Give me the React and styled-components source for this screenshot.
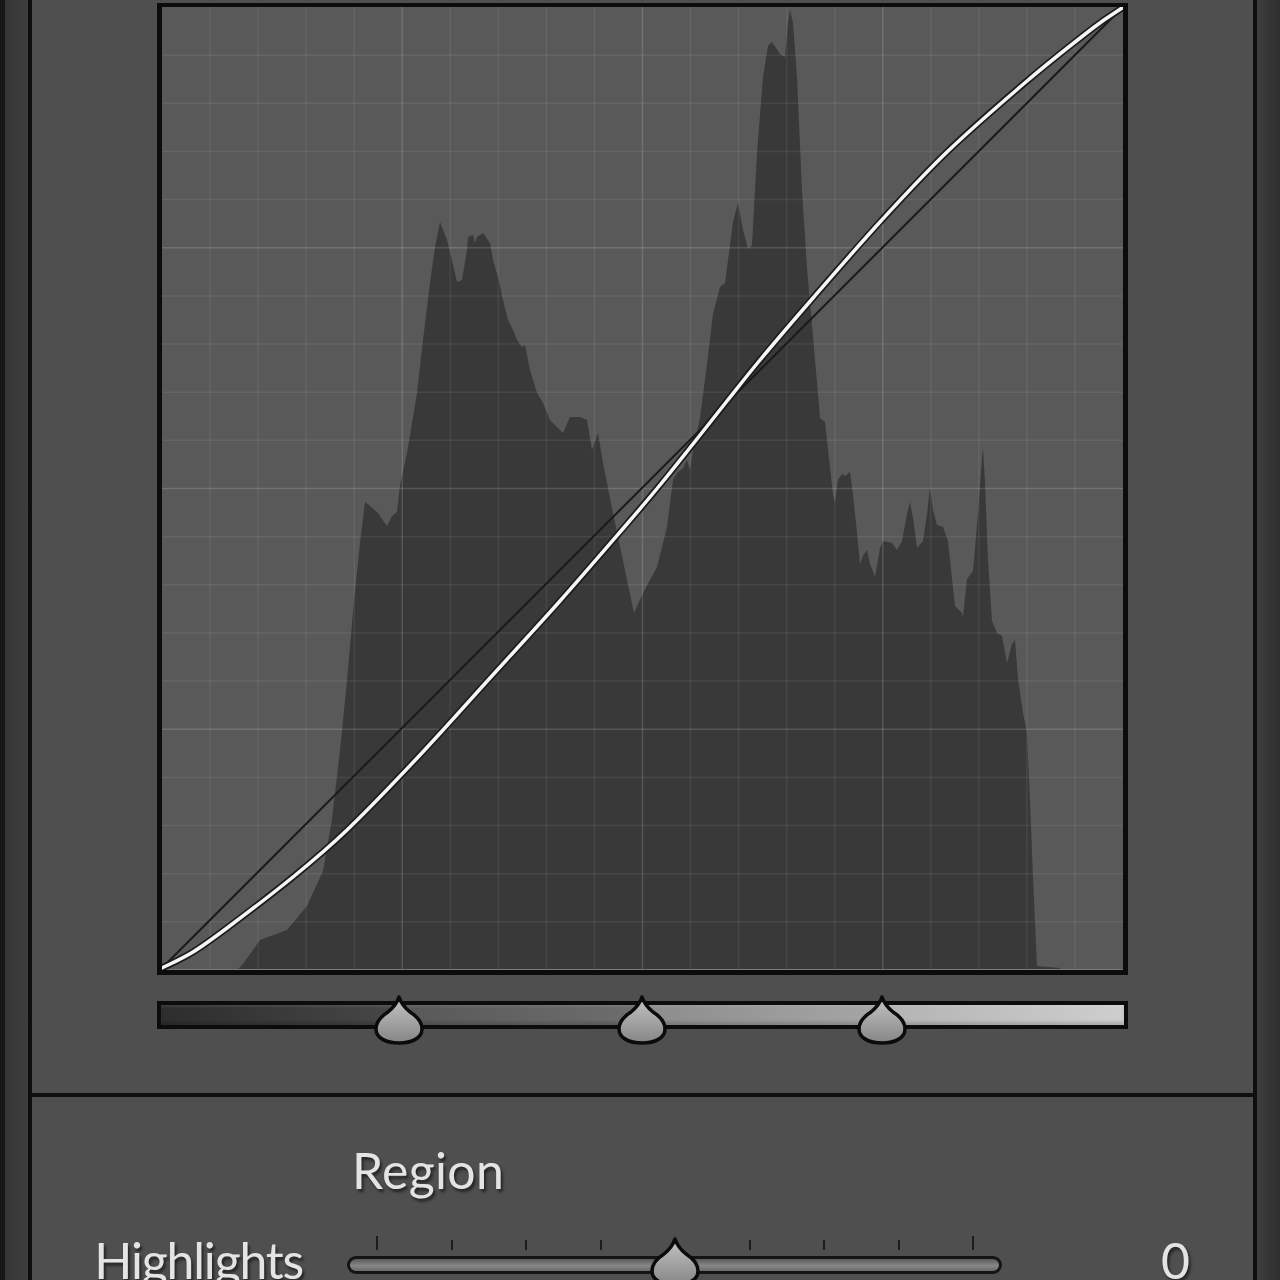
import styled, { createGlobalStyle } from "styled-components";

const GlobalStyle = createGlobalStyle`
  html, body {
    margin: 0;
    padding: 0;
    background: #3a3a3a;
  }
  body {
    font-family: Lato, "Open Sans", sans-serif;
  }
`;

// page coords, graph inner box is x 162..1123, y 7..970
const HISTO = [
  [237, 970], [243, 964], [260, 940], [287, 930], [307, 906], [323, 871], [332, 819],
  [340, 750], [347, 681], [353, 612], [360, 543], [365, 502], [370, 506], [377, 512],
  [387, 526], [392, 516], [397, 512], [400, 485], [407, 453], [417, 393], [423, 340],
  [430, 283], [435, 247], [440, 222], [447, 240], [452, 260], [457, 282], [462, 280],
  [467, 250], [468, 237], [473, 235], [475, 243], [477, 237], [483, 233], [490, 243],
  [493, 260], [498, 277], [503, 300], [508, 320], [513, 330], [517, 340], [522, 347],
  [525, 345], [530, 370], [537, 393], [543, 403], [550, 420], [557, 427], [563, 433],
  [570, 417], [580, 417], [587, 420], [592, 450], [598, 433], [603, 463], [613, 513],
  [627, 580], [634, 613], [643, 593], [657, 567], [667, 527], [673, 480], [677, 473],
  [683, 468], [687, 460], [690, 470], [693, 450], [700, 418], [707, 364], [713, 314],
  [720, 287], [725, 283], [730, 245], [733, 222], [738, 203], [743, 230], [748, 249],
  [752, 245], [757, 153], [763, 77], [768, 46], [772, 42], [780, 54], [785, 57],
  [788, 23], [790, 10], [793, 23], [797, 77], [802, 191], [807, 268], [812, 325],
  [817, 383], [820, 418], [825, 422], [828, 449], [833, 495], [835, 502], [838, 480],
  [842, 474], [845, 476], [850, 472], [853, 495], [857, 533], [860, 564], [863, 556],
  [867, 550], [870, 564], [875, 577], [880, 548], [883, 541], [892, 543], [897, 550],
  [902, 541], [907, 514], [910, 502], [913, 518], [917, 548], [923, 541], [927, 514],
  [930, 487], [933, 510], [937, 525], [943, 527], [948, 541], [952, 579], [955, 606],
  [962, 613], [963, 617], [967, 579], [973, 571], [978, 514], [982, 457], [983, 449],
  [985, 483], [988, 560], [992, 621], [997, 633], [1002, 636], [1007, 663], [1012, 644],
  [1015, 640], [1018, 679], [1023, 713], [1027, 732], [1030, 801], [1033, 878],
  [1037, 966], [1060, 968], [1060, 970],
];

const CURVE = [
  [162, 968], [193, 952], [227, 928], [293, 877], [347, 830], [420, 755], [490, 678],
  [560, 601], [627, 524], [660, 485], [693, 444], [727, 401], [760, 360], [813, 298],
  [880, 222], [947, 152], [1027, 81], [1093, 28], [1122, 8],
];

const smooth = (pts) => {
  let d = `M${pts[0][0]} ${pts[0][1]}`;
  for (let i = 0; i < pts.length - 1; i++) {
    const p0 = pts[i - 1] || pts[i];
    const p1 = pts[i];
    const p2 = pts[i + 1];
    const p3 = pts[i + 2] || p2;
    const c1x = p1[0] + (p2[0] - p0[0]) / 6;
    const c1y = p1[1] + (p2[1] - p0[1]) / 6;
    const c2x = p2[0] - (p3[0] - p1[0]) / 6;
    const c2y = p2[1] - (p3[1] - p1[1]) / 6;
    d += ` C${c1x.toFixed(1)} ${c1y.toFixed(1)} ${c2x.toFixed(1)} ${c2y.toFixed(1)} ${p2[0]} ${p2[1]}`;
  }
  return d;
};

const GX = 162;
const GY = 7;
const GW = 961;
const GH = 963;

const Page = styled.div`
  display: flex;
  width: 1280px;
  height: 1280px;
  overflow: hidden;
  background: #3a3a3a;
`;

const Gutter = styled.div`
  flex: none;
  width: ${(p) => p.$w}px;
  box-sizing: border-box;
  border-left: ${(p) => (p.$edge ? "5px solid #171717" : "none")};
  background: ${(p) =>
    p.$edge
      ? "linear-gradient(90deg, #363636, #3e3e3e)"
      : "linear-gradient(90deg, #3d3d3d, #2f2f2f)"};
`;

const Panel = styled.div`
  flex: 1;
  display: flex;
  flex-direction: column;
  background: #4f4f4f;
  border-left: 4px solid #0e0e0e;
  border-right: 4px solid #0e0e0e;
`;

const CurveSection = styled.div`
  padding: 3px 125px 64px;
  border-bottom: 4px solid #0e0e0e;
`;

const Graph = styled.div`
  box-sizing: border-box;
  width: 971px;
  height: 972px;
  border: 5px solid #0c0c0c;
  border-top-width: 4px;
  background: #595959;
  svg {
    display: block;
  }
`;

const BarWrap = styled.div`
  position: relative;
  margin-top: 26px;
`;

const GradientBar = styled.div`
  box-sizing: border-box;
  height: 28px;
  border: 4px solid #0c0c0c;
  background: linear-gradient(
    90deg,
    #2d2d2d 0%,
    #474747 24.7%,
    #585858 24.7%,
    #6e6e6e 49.9%,
    #8c8c8c 49.9%,
    #a6a6a6 74.9%,
    #b3b3b3 74.9%,
    #cecece 100%
  );
  box-shadow: inset 0 2px 2px rgba(255, 255, 255, 0.08), inset 0 -3px 3px rgba(0, 0, 0, 0.15);
`;

const ThumbBox = styled.div`
  position: absolute;
  top: ${(p) => p.$top}px;
  left: ${(p) => p.$left};
  width: 52px;
  height: 52px;
  transform: translateX(-50%);
  svg {
    display: block;
  }
`;

const RegionSection = styled.div`
  padding-top: 43px;
  color: #e4e4e4;
`;

const Title = styled.div`
  margin-left: 320px;
  font-size: 50px;
  line-height: 60px;
  height: 60px;
  letter-spacing: 0.3px;
  text-shadow: 2px 3px 3px rgba(0, 0, 0, 0.55);
`;

const Row = styled.div`
  display: grid;
  grid-template-columns: 315px 655px 1fr;
  margin-top: 30px;
  height: 60px;
`;

const Label = styled.div`
  text-align: right;
  padding-right: ${(p) => p.$pr}px;
  font-size: 50px;
  line-height: 60px;
  letter-spacing: ${(p) => (p.$tight ? "-1.2px" : "0")};
  text-shadow: 2px 3px 3px rgba(0, 0, 0, 0.55);
`;

const SliderCell = styled.div`
  position: relative;
  height: 60px;
`;

const Ticks = styled.div`
  display: flex;
  justify-content: space-between;
  align-items: flex-end;
  height: 14px;
  margin-top: 6px;
  padding: 0 28px 0 29px;
`;

const Tick = styled.div`
  width: 2px;
  height: ${(p) => (p.$long ? 14 : 10)}px;
  background: #1c1c1c;
`;

const Track = styled.div`
  box-sizing: border-box;
  margin-top: 6px;
  height: 18px;
  border: 3px solid #141414;
  border-radius: 9px;
  background: linear-gradient(180deg, #5a5a5a 0%, #878787 55%, #6a6a6a 100%);
`;

const Thumb = ({ left, top }) => (
  <ThumbBox $left={left} $top={top}>
    <svg width="52" height="52" viewBox="0 0 52 52">
      <defs>
        <linearGradient id="thumbFill" x1="0" y1="0" x2="0" y2="1">
          <stop offset="0" stopColor="#c4c4c4" />
          <stop offset="0.55" stopColor="#a2a2a2" />
          <stop offset="1" stopColor="#858585" />
        </linearGradient>
      </defs>
      <path
        d="M26 3 C28 9 32 14 37 18 C45 23 49 29 49 35 C49 44 39 49 26 49 C13 49 3 44 3 35 C3 29 7 23 15 18 C20 14 24 9 26 3 Z"
        fill="url(#thumbFill)"
        stroke="#0b0b0b"
        strokeWidth="3.5"
        strokeLinejoin="round"
      />
    </svg>
  </ThumbBox>
);

const ToneGraph = () => {
  const lines = [];
  for (let i = 1; i < 20; i++) {
    const major = i % 5 === 0;
    const x = GX + (GW * i) / 20;
    const y = GY + (GH * i) / 20;
    const stroke = major ? "rgba(255,255,255,0.15)" : "rgba(255,255,255,0.07)";
    lines.push(<line key={"v" + i} x1={x} y1={GY} x2={x} y2={GY + GH} stroke={stroke} strokeWidth="1.5" />);
    lines.push(<line key={"h" + i} x1={GX} y1={y} x2={GX + GW} y2={y} stroke={stroke} strokeWidth="1.5" />);
  }
  const histo = "M" + HISTO.map((p) => p.join(" ")).join(" L") + " Z";
  const curve = smooth(CURVE);
  return (
    <svg width={GW} height={GH} viewBox={`${GX} ${GY} ${GW} ${GH}`}>
      <path d={histo} fill="#393939" />
      {lines}
      <line x1={GX} y1={GY + GH} x2={GX + GW} y2={GY + GH} stroke="#7a7a7a" strokeWidth="2" />
      <line x1="162" y1="968" x2="1122" y2="8" stroke="#1b1b1b" strokeWidth="2" />
      <path d={curve} fill="none" stroke="#1c1c1c" strokeWidth="7" strokeLinecap="round" />
      <path d={curve} fill="none" stroke="#f6f6f6" strokeWidth="3.5" strokeLinecap="round" />
    </svg>
  );
};

export default function App() {
  const ticks = [0, 1, 2, 3, 4, 5, 6, 7, 8];
  return (
    <>
      <GlobalStyle />
      <Page>
        <Gutter $w={28} $edge />
        <Panel>
          <CurveSection>
            <Graph>
              <ToneGraph />
            </Graph>
            <BarWrap>
              <GradientBar />
              <Thumb left="242px" top={-7} />
              <Thumb left="485px" top={-7} />
              <Thumb left="725px" top={-7} />
            </BarWrap>
          </CurveSection>
          <RegionSection>
            <Title>Region</Title>
            <Row>
              <Label $pr={44} $tight>Highlights</Label>
              <SliderCell>
                <Ticks>
                  {ticks.map((t) => (
                    <Tick key={t} $long={t === 0 || t === 8} />
                  ))}
                </Ticks>
                <Track />
                <Thumb left="50%" top={6} />
              </SliderCell>
              <Label $pr={63}>0</Label>
            </Row>
          </RegionSection>
        </Panel>
        <Gutter $w={23} />
      </Page>
    </>
  );
}
